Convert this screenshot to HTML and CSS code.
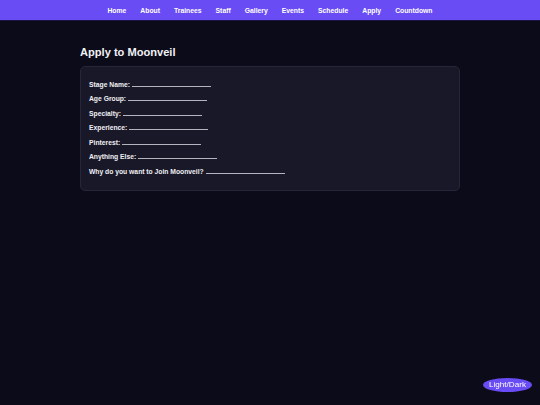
FILE: index.html
```html
<!DOCTYPE html>
<html lang="en">
<head>
<meta charset="utf-8">
<title>Apply to Moonveil</title>
<link rel="stylesheet" href="styles.css">
</head>
<body>
<nav class="topnav">
  <a href="#">Home</a>
  <a href="#">About</a>
  <a href="#">Trainees</a>
  <a href="#">Staff</a>
  <a href="#">Gallery</a>
  <a href="#">Events</a>
  <a href="#">Schedule</a>
  <a href="#">Apply</a>
  <a href="#">Countdown</a>
</nav>
<main class="page">
  <h1 class="title">Apply to Moonveil</h1>
  <section class="card">
    <p class="row">Stage Name: <span class="blank"></span></p>
    <p class="row">Age Group: <span class="blank"></span></p>
    <p class="row">Specialty: <span class="blank"></span></p>
    <p class="row">Experience: <span class="blank"></span></p>
    <p class="row">Pinterest: <span class="blank"></span></p>
    <p class="row">Anything Else: <span class="blank"></span></p>
    <p class="row">Why do you want to Join Moonveil? <span class="blank"></span></p>
  </section>
</main>
<button class="toggle" type="button">Light/Dark</button>
</body>
</html>
```
FILE: styles.css
```css
html, body {
  margin: 0;
  padding: 0;
}
body {
  background: #0c0b19;
  color: #ececf2;
  font-family: "Liberation Sans", Arial, sans-serif;
  min-height: 405px;
}
.topnav {
  display: flex;
  justify-content: center;
  align-items: center;
  gap: 14px;
  height: 20px;
  background: #6a4cf4;
  border-bottom: 1px solid #1b1442;
}
.topnav a {
  color: #ffffff;
  text-decoration: none;
  font-weight: bold;
  font-size: 6.8px;
}
.page {
  width: 380px;
  margin: 0 auto;
  padding-top: 25px;
}
.title {
  margin: 0 0 7px 0;
  font-size: 11.1px;
  font-weight: bold;
  color: #f2f2f6;
  line-height: 12.8px;
}
.card {
  background: #191828;
  border: 1px solid #262539;
  border-radius: 5px;
  padding: 7px 9px 8px 8px;
}
.row {
  margin: 6.75px 0;
  font-size: 6.75px;
  font-weight: bold;
  line-height: 7.8px;
  color: #f0f0f4;
}
.blank {
  display: inline-block;
  width: 79px;
  height: 0;
  border-bottom: 1px solid #b4b4c0;
  vertical-align: baseline;
}
.toggle {
  position: fixed;
  right: 8px;
  bottom: 13px;
  width: 49px;
  height: 14px;
  padding: 0;
  border: none;
  border-radius: 50%;
  background: #6a4cf4;
  color: #ffffff;
  font-family: "Liberation Sans", Arial, sans-serif;
  font-size: 8.1px;
  line-height: 14px;
}
```
